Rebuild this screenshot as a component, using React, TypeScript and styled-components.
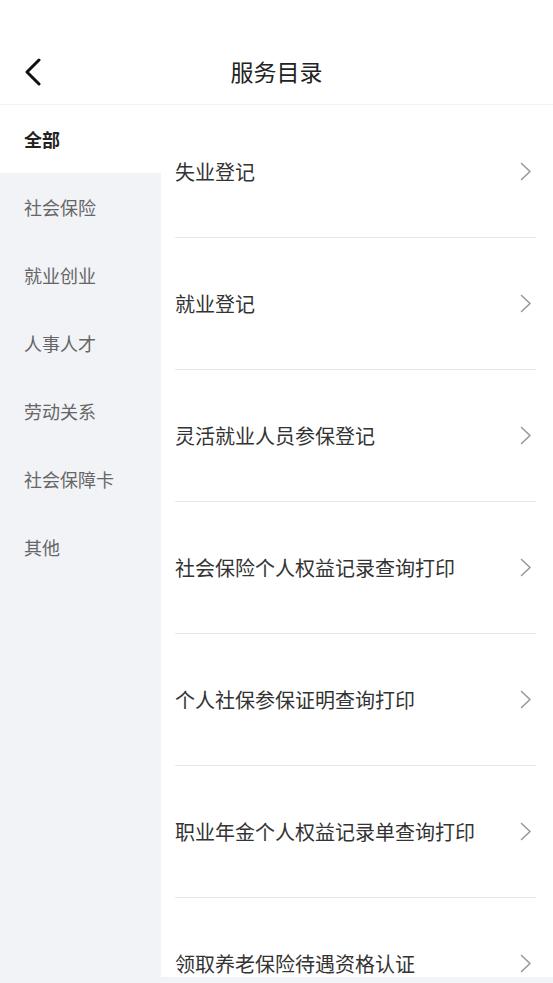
import React, { useState } from 'react';
import styled, { createGlobalStyle } from 'styled-components';

const GlobalStyle = createGlobalStyle`
    html, body {
        margin: 0;
        padding: 0;
        background: #f2f3f7;
        font-family: "Noto Sans CJK SC", "Noto Sans", sans-serif;
    }
`

const categories = ['全部', '社会保险', '就业创业', '人事人才', '劳动关系', '社会保障卡', '其他']

const services = [
    '失业登记',
    '就业登记',
    '灵活就业人员参保登记',
    '社会保险个人权益记录查询打印',
    '个人社保参保证明查询打印',
    '职业年金个人权益记录单查询打印',
    '领取养老保险待遇资格认证',
]

const Page = styled.div`
    width: 553px;
    height: 983px;
    display: flex;
    flex-direction: column;
    background: #f2f3f7;
`

const Header = styled.header`
    height: 105px;
    box-sizing: border-box;
    padding-top: 38px;
    flex-shrink: 0;
    display: flex;
    align-items: center;
    justify-content: center;
    position: relative;
    background: #fff;
    border-bottom: 1px solid #f2f2f2;
`

const BackButton = styled.button`
    position: absolute;
    left: 20px;
    top: 54px;
    border: 0;
    background: none;
    padding: 4px;
    display: flex;
    cursor: pointer;
`

const Title = styled.h1`
    margin: 0;
    font-size: 23px;
    font-weight: 400;
    color: #222;
`

const Body = styled.div`
    height: 872px;
    display: flex;
    overflow: hidden;
    background: #fff;
`

const Sidebar = styled.ul`
    width: 161px;
    flex-shrink: 0;
    margin: 0;
    padding: 0;
    list-style: none;
    background: #f2f3f7;
`

const Category = styled.li<{ active: boolean }>`
    height: 68px;
    display: flex;
    align-items: center;
    padding-left: 24px;
    font-size: 18px;
    font-weight: ${( props ) => props.active ? 700 : 400};
    color: ${( props ) => props.active ? '#222' : '#666'};
    background: ${( props ) => props.active ? '#fff' : 'transparent'};
    cursor: pointer;
`

const List = styled.ul`
    flex: 1;
    margin: 0;
    padding: 1px 17px 0 14px;
    list-style: none;
    background: #fff;
`

const Row = styled.li`
    height: 131px;
    display: flex;
    align-items: center;
    justify-content: space-between;
    border-bottom: 1px solid #e8e8e8;
    font-size: 20px;
    color: #333;
    cursor: pointer;
`

const Chevron = styled.svg`
    margin-right: 4px;
    flex-shrink: 0;
`

function App(): JSX.Element {
    const [active, setActive] = useState( 0 )

    return (
        <Page>
            <GlobalStyle/>
            <Header>
                <BackButton type='button' aria-label='back'>
                    <svg width='18' height='28' viewBox='0 0 18 28'>
                        <path d='M15 2 L3 14 L15 26' fill='none' stroke='#111' strokeWidth='3'
                              strokeLinecap='round' strokeLinejoin='round'/>
                    </svg>
                </BackButton>
                <Title>服务目录</Title>
            </Header>
            <Body>
                <Sidebar>
                    {categories.map( ( name, index ) => (
                        <Category key={name} active={index === active} onClick={() => setActive( index )}>
                            {name}
                        </Category>
                    ) )}
                </Sidebar>
                <List>
                    {services.map( name => (
                        <Row key={name}>
                            <span>{name}</span>
                            <Chevron width='12' height='19' viewBox='0 0 12 19'>
                                <path d='M1.5 1.5 L10 9.5 L1.5 17.5' fill='none' stroke='#999' strokeWidth='1.6'
                                      strokeLinecap='round' strokeLinejoin='round'/>
                            </Chevron>
                        </Row>
                    ) )}
                </List>
            </Body>
        </Page>
    )
}

export default App;
